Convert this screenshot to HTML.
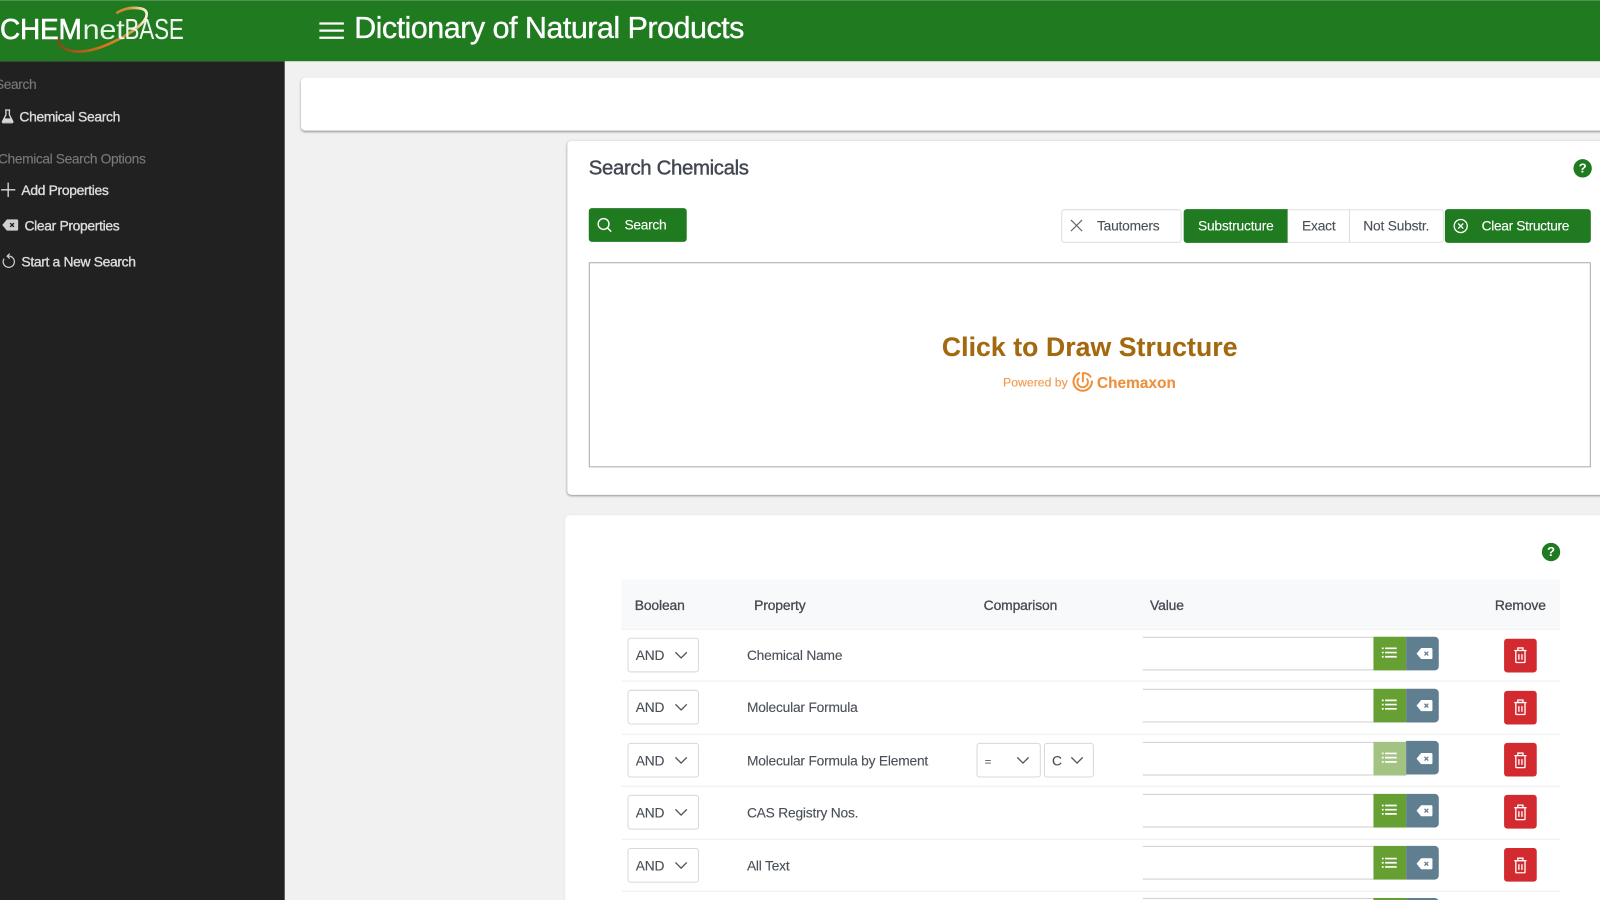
<!DOCTYPE html>
<html lang="en"><head><meta charset="utf-8"><title>Dictionary of Natural Products</title>
<style>
html,body{margin:0;padding:0;width:1600px;height:900px;overflow:hidden;background:#f1f1f1}
#r{position:absolute;left:0;top:0;width:1568px;height:882px;transform:scale(1.020408);transform-origin:0 0;overflow:hidden;font-family:"Liberation Sans",sans-serif;font-size:13.5px;letter-spacing:-.2px;color:#4a5058}
#r div,#r span,#r svg{position:absolute;white-space:nowrap;box-sizing:border-box}
#r svg{overflow:visible}
.t{line-height:18px;height:18px;margin-top:.6px;-webkit-text-stroke:.12px currentColor}
.hd{background:#1f7a20;left:0;top:0;width:1568px;height:60px;border-top:1px solid #4e9450}
.sb{background:#212121;left:0;top:60px;width:279px;height:822px}
.card{background:#fff;border-radius:4px;box-shadow:0 1px 2px rgba(0,0,0,.38)}
.lab{color:#7a7a7a;letter-spacing:-.37px}
.nav{color:#dcdcdc;font-size:13.6px;-webkit-text-stroke:.35px #dcdcdc;letter-spacing:-.33px}
.th{color:#454b52;-webkit-text-stroke:.3px #454b52;font-size:13.6px;letter-spacing:-.12px}
.sel{background:#fff;border:1px solid #d5d8db;border-radius:3px;height:34px}
.sep{left:609px;width:920px;height:1px;background:#edeeef}
.inp{left:1120px;width:226px;height:33px;border-top:1.5px solid #cfcfcf;border-bottom:1.5px solid #cfcfcf;background:#fff}
.gr{left:1346px;width:32px;height:33px;background:#67a032}
.sl{left:1378px;width:32px;height:33px;background:#5f7e90;border-radius:0 4px 4px 0}
.rd{left:1474px;width:32px;height:33px;background:#d32a30;border-radius:3px}
.btn{background:#1f7a20;color:#fff;border-radius:3px}
</style></head><body>
<svg width="0" height="0" style="position:absolute"><defs>
<symbol id="chev" viewBox="0 0 14 8"><path d="M1 1l6 6 6-6" fill="none" stroke="#555" stroke-width="1.4"/></symbol>
<symbol id="list" viewBox="0 0 16 12"><path d="M3.500 1.500h12.500M3.500 6h12.500M3.500 10.500h12.500M0 1.500h2M0 6h2M0 10.500h2" fill="none" stroke="#fff" stroke-width="1.800"/></symbol>
<symbol id="back" viewBox="0 0 17 12"><path d="M5 0h10.500a1.500 1.500 0 0 1 1.500 1.500v9a1.500 1.500 0 0 1-1.500 1.500H5L0 6z" fill="#fff"/><path d="M8.500 4l4 4m0-4l-4 4" stroke="#5f7e90" stroke-width="1.400"/></symbol>
<symbol id="trash" viewBox="0 0 14 16"><path d="M1 3.500h12M4.500 3.500V1h5v2.500M2.500 3.500v11a.8.8 0 0 0 .8.8h7.400a.8.8 0 0 0 .8-.8v-11M5.500 7v5.500M8.500 7v5.500" fill="none" stroke="#fff" stroke-width="1.300"/></symbol>
</defs></svg>
<div id="r">
<div class="hd"></div>
<div class="sb"></div>

<!-- Logo -->
<svg style="left:0;top:0" width="190" height="59" viewBox="0 0 190 59">
<defs><linearGradient id="arc" x1="0" y1="0" x2="1" y2="0"><stop offset="0" stop-color="#7a4a1c"/><stop offset=".55" stop-color="#d9761f"/><stop offset=".8" stop-color="#c9953a"/><stop offset="1" stop-color="#fff6d8"/></linearGradient></defs>
<path d="M56 36C58 48 68 52 84 50C104 47 128 33 138 24C146 16 146 9 136 8C128 7 120 9 114 13" fill="none" stroke="url(#arc)" stroke-width="2.600"/>
<text x="0" y="38" font-family="Liberation Sans,sans-serif" font-size="28" fill="#fff" stroke="#fff" stroke-width=".6" textLength="80" lengthAdjust="spacingAndGlyphs">CHEM</text>
<text x="81" y="38" font-family="Liberation Sans,sans-serif" font-size="27" fill="#e9f2e6" textLength="41" lengthAdjust="spacingAndGlyphs">net</text>
<text x="122" y="38" font-family="Liberation Sans,sans-serif" font-size="28" fill="#f2f6ef" textLength="58" lengthAdjust="spacingAndGlyphs">BASE</text>
</svg>

<!-- Header -->
<svg style="left:313px;top:21px" width="24" height="18"><path d="M0 2h24M0 9h24M0 16h24" stroke="#fff" stroke-width="2.200"/></svg>
<span class="t" style="left:347px;top:18px;margin-top:0;height:20px;line-height:20px;font-size:30px;letter-spacing:-.55px;color:#fff;-webkit-text-stroke:.3px #fff">Dictionary of Natural Products</span>

<!-- Sidebar -->
<span class="t lab" style="left:-5px;top:73px">Search</span>
<svg style="left:1px;top:107px" width="13" height="14" viewBox="0 0 13 14"><path d="M4 .8h5M4.800 1v4.500L1.500 12a.9.9 0 0 0 .8 1.300h8.400a.9.9 0 0 0 .8-1.300L8.200 5.500V1" fill="none" stroke="#d8d8d8" stroke-width="1.300"/><path d="M3.300 9h6.400l1.500 3.500H1.800z" fill="#d8d8d8"/></svg>
<span class="t nav" style="left:19px;top:105px">Chemical Search</span>
<span class="t lab" style="left:-2px;top:146px">Chemical Search Options</span>
<svg style="left:1px;top:179px" width="14" height="14"><path d="M7 0v14M0 7h14" stroke="#dcdcdc" stroke-width="1.300"/></svg>
<span class="t nav" style="left:21px;top:177px">Add Properties</span>
<svg style="left:2px;top:215px" width="16" height="11" viewBox="0 0 17 12"><path d="M5 0h10.500a1.500 1.500 0 0 1 1.500 1.500v9a1.500 1.500 0 0 1-1.500 1.500H5L0 6z" fill="#cfcfcf"/><path d="M8.500 4l4 4m0-4l-4 4" stroke="#212121" stroke-width="1.400"/></svg>
<span class="t nav" style="left:24px;top:212px">Clear Properties</span>
<svg style="left:2px;top:248px" width="13" height="15" viewBox="0 0 13 15"><path d="M2 5.500A5.500 5.500 0 1 0 6.500 3H5" fill="none" stroke="#cfcfcf" stroke-width="1.200"/><path d="M7.500 .6L5 3l2.500 2.400" fill="none" stroke="#cfcfcf" stroke-width="1.200"/></svg>
<span class="t nav" style="left:21px;top:247px">Start a New Search</span>

<!-- Top strip -->
<div class="card" style="left:295px;top:76px;width:1290px;height:52px"></div>

<!-- Search card -->
<div class="card" style="left:556px;top:138px;width:1030px;height:347px"></div>
<span class="t" style="left:577px;top:155px;margin-top:0;height:20px;line-height:20px;font-size:20px;letter-spacing:-.35px;color:#414852;-webkit-text-stroke:.4px #414852">Search Chemicals</span>
<div style="left:1542px;top:156px;width:18px;height:18px;border-radius:50%;background:#1f7a20;color:#fff;font-weight:bold;font-size:13px;line-height:18px;text-align:center;letter-spacing:0">?</div>

<div class="btn" style="left:577px;top:204px;width:96px;height:33px"></div>
<svg style="left:585px;top:213px" width="15" height="15"><circle cx="6.500" cy="6.500" r="5.300" fill="none" stroke="#fff" stroke-width="1.400"/><path d="M10.500 10.500l3.500 3.500" stroke="#fff" stroke-width="1.400"/></svg>
<span class="t" style="left:612px;top:211px;color:#fff;letter-spacing:-.3px">Search</span>

<div style="left:1040px;top:205px;width:118px;height:33px;background:#fff;border:1px solid #dcdee0;border-radius:3px"></div>
<svg style="left:1049px;top:215px" width="12" height="12"><path d="M.5 .5l11 11m0-11l-11 11" stroke="#666" stroke-width="1.200"/></svg>
<span class="t" style="left:1075px;top:213px;margin-top:0">Tautomers</span>
<div class="btn" style="left:1159.500px;top:205px;width:102.500px;height:33px;border-radius:3px 0 0 3px"></div>
<span class="t" style="left:1174px;top:213px;margin-top:0;color:#fff">Substructure</span>
<div style="left:1262px;top:205px;width:153px;height:33px;background:#fff;border:1px solid #dcdee0;border-left:0;border-radius:0 3px 3px 0"></div>
<div style="left:1322px;top:205px;width:1px;height:33px;background:#dcdee0"></div>
<span class="t" style="left:1276px;top:213px;margin-top:0">Exact</span>
<span class="t" style="left:1336px;top:213px;margin-top:0">Not Substr.</span>
<div class="btn" style="left:1416px;top:205px;width:143px;height:33px"></div>
<svg style="left:1424px;top:214px" width="15" height="15"><circle cx="7.500" cy="7.500" r="6.400" fill="none" stroke="#fff" stroke-width="1.300"/><path d="M5 5l5 5m0-5l-5 5" stroke="#fff" stroke-width="1.300"/></svg>
<span class="t" style="left:1452px;top:213px;margin-top:0;color:#fff;letter-spacing:-.34px">Clear Structure</span>

<div style="left:577px;top:257px;width:982px;height:201px;background:#fff;border:1px solid #aaa"></div>
<span class="t" style="left:923px;top:326px;margin-top:0;height:28px;line-height:28px;font-size:26px;font-weight:bold;letter-spacing:.1px;color:#a2690f">Click to Draw Structure</span>
<span class="t" style="left:983px;top:365.500px;margin-top:0;font-size:12px;letter-spacing:0;color:#f0984a">Powered by</span>
<svg style="left:1051px;top:364px" width="20" height="20" viewBox="0 0 20 20"><path d="M7.500 1.300A9 9 0 1 0 19 9" fill="none" stroke="#ef8f3a" stroke-width="2"/><path d="M6.500 6.500A5.200 5.200 0 1 0 14 7" fill="none" stroke="#ef8f3a" stroke-width="1.800"/><path d="M10.200 1v9.500M10.200 1.500C13.500 1.500 17 3 18 6" fill="none" stroke="#ef8f3a" stroke-width="1.900"/></svg>
<span class="t" style="left:1075px;top:367px;margin-top:0;font-size:15px;font-weight:bold;letter-spacing:.1px;color:#ef8f3a">Chemaxon</span>

<!-- Properties card -->
<div class="card" style="left:554px;top:505px;width:1030px;height:400px;box-shadow:0 0 2px rgba(0,0,0,.05)"></div>
<div style="left:1511px;top:532px;width:18px;height:18px;border-radius:50%;background:#1f7a20;color:#fff;font-weight:bold;font-size:13px;line-height:18px;text-align:center;letter-spacing:0">?</div>
<div style="left:609px;top:568px;width:920px;height:47px;background:#f8f9fa"></div>
<div class="sep" style="top:615.500px;background:#e9ecef"></div>
<span class="t th" style="left:622px;top:584px">Boolean</span>
<span class="t th" style="left:739px;top:584px">Property</span>
<span class="t th" style="left:964px;top:584px">Comparison</span>
<span class="t th" style="left:1127px;top:584px">Value</span>
<span class="t th" style="left:1465px;top:584px">Remove</span>

<!-- Row 1 -->
<div class="sel" style="left:615px;top:625px;width:70px"></div><span class="t" style="left:623px;top:633px">AND</span>
<svg style="left:661px;top:638px" width="13" height="8"><use href="#chev"/></svg>
<span class="t" style="left:732px;top:633px">Chemical Name</span>
<div class="inp" style="top:624px"></div><div class="gr" style="top:624px"></div><div class="sl" style="top:624px"></div>
<svg style="left:1354px;top:634px" width="15" height="11"><use href="#list"/></svg>
<svg style="left:1388px;top:634.500px" width="16" height="11"><use href="#back"/></svg>
<div class="rd" style="top:625.500px"></div>
<svg style="left:1483px;top:634px" width="14" height="16"><use href="#trash"/></svg>
<div class="sep" style="top:667px"></div>

<!-- Row 2 -->
<div class="sel" style="left:615px;top:676px;width:70px"></div><span class="t" style="left:623px;top:684px">AND</span>
<svg style="left:661px;top:689px" width="13" height="8"><use href="#chev"/></svg>
<span class="t" style="left:732px;top:684px">Molecular Formula</span>
<div class="inp" style="top:675px"></div><div class="gr" style="top:675px"></div><div class="sl" style="top:675px"></div>
<svg style="left:1354px;top:685px" width="15" height="11"><use href="#list"/></svg>
<svg style="left:1388px;top:685.500px" width="16" height="11"><use href="#back"/></svg>
<div class="rd" style="top:676.500px"></div>
<svg style="left:1483px;top:685px" width="14" height="16"><use href="#trash"/></svg>
<div class="sep" style="top:718.500px"></div>

<!-- Row 3 -->
<div class="sel" style="left:615px;top:728px;width:70px"></div><span class="t" style="left:623px;top:736px">AND</span>
<svg style="left:661px;top:741px" width="13" height="8"><use href="#chev"/></svg>
<span class="t" style="left:732px;top:736px">Molecular Formula by Element</span>
<div class="sel" style="left:957px;top:728px;width:63px"></div><span class="t" style="left:965px;top:737px;font-size:11px">=</span>
<svg style="left:996px;top:741px" width="13" height="8"><use href="#chev"/></svg>
<div class="sel" style="left:1023px;top:728px;width:49px"></div><span class="t" style="left:1031px;top:736px">C</span>
<svg style="left:1049px;top:741px" width="13" height="8"><use href="#chev"/></svg>
<div class="inp" style="top:726.500px"></div><div class="gr" style="top:726.500px;background:#a3c382"></div><div class="sl" style="top:726px"></div>
<svg style="left:1354px;top:737px" width="15" height="11"><use href="#list"/></svg>
<svg style="left:1388px;top:737.500px" width="16" height="11"><use href="#back"/></svg>
<div class="rd" style="top:728px"></div>
<svg style="left:1483px;top:737px" width="14" height="16"><use href="#trash"/></svg>
<div class="sep" style="top:770px"></div>

<!-- Row 4 -->
<div class="sel" style="left:615px;top:779px;width:70px"></div><span class="t" style="left:623px;top:787px">AND</span>
<svg style="left:661px;top:792px" width="13" height="8"><use href="#chev"/></svg>
<span class="t" style="left:732px;top:787px">CAS Registry Nos.</span>
<div class="inp" style="top:777.500px"></div><div class="gr" style="top:777.500px"></div><div class="sl" style="top:777.500px"></div>
<svg style="left:1354px;top:788px" width="15" height="11"><use href="#list"/></svg>
<svg style="left:1388px;top:788.500px" width="16" height="11"><use href="#back"/></svg>
<div class="rd" style="top:779px"></div>
<svg style="left:1483px;top:788px" width="14" height="16"><use href="#trash"/></svg>
<div class="sep" style="top:821.500px"></div>

<!-- Row 5 -->
<div class="sel" style="left:615px;top:831px;width:70px"></div><span class="t" style="left:623px;top:839px">AND</span>
<svg style="left:661px;top:844px" width="13" height="8"><use href="#chev"/></svg>
<span class="t" style="left:732px;top:839px">All Text</span>
<div class="inp" style="top:829px"></div><div class="gr" style="top:829px"></div><div class="sl" style="top:829px"></div>
<svg style="left:1354px;top:840px" width="15" height="11"><use href="#list"/></svg>
<svg style="left:1388px;top:840.500px" width="16" height="11"><use href="#back"/></svg>
<div class="rd" style="top:831px"></div>
<svg style="left:1483px;top:840px" width="14" height="16"><use href="#trash"/></svg>
<div class="sep" style="top:873px"></div>

<!-- Row 6 (cut off) -->
<div class="inp" style="top:880px"></div><div class="gr" style="top:880px"></div><div class="sl" style="top:880px"></div>
</div>
</body></html>
